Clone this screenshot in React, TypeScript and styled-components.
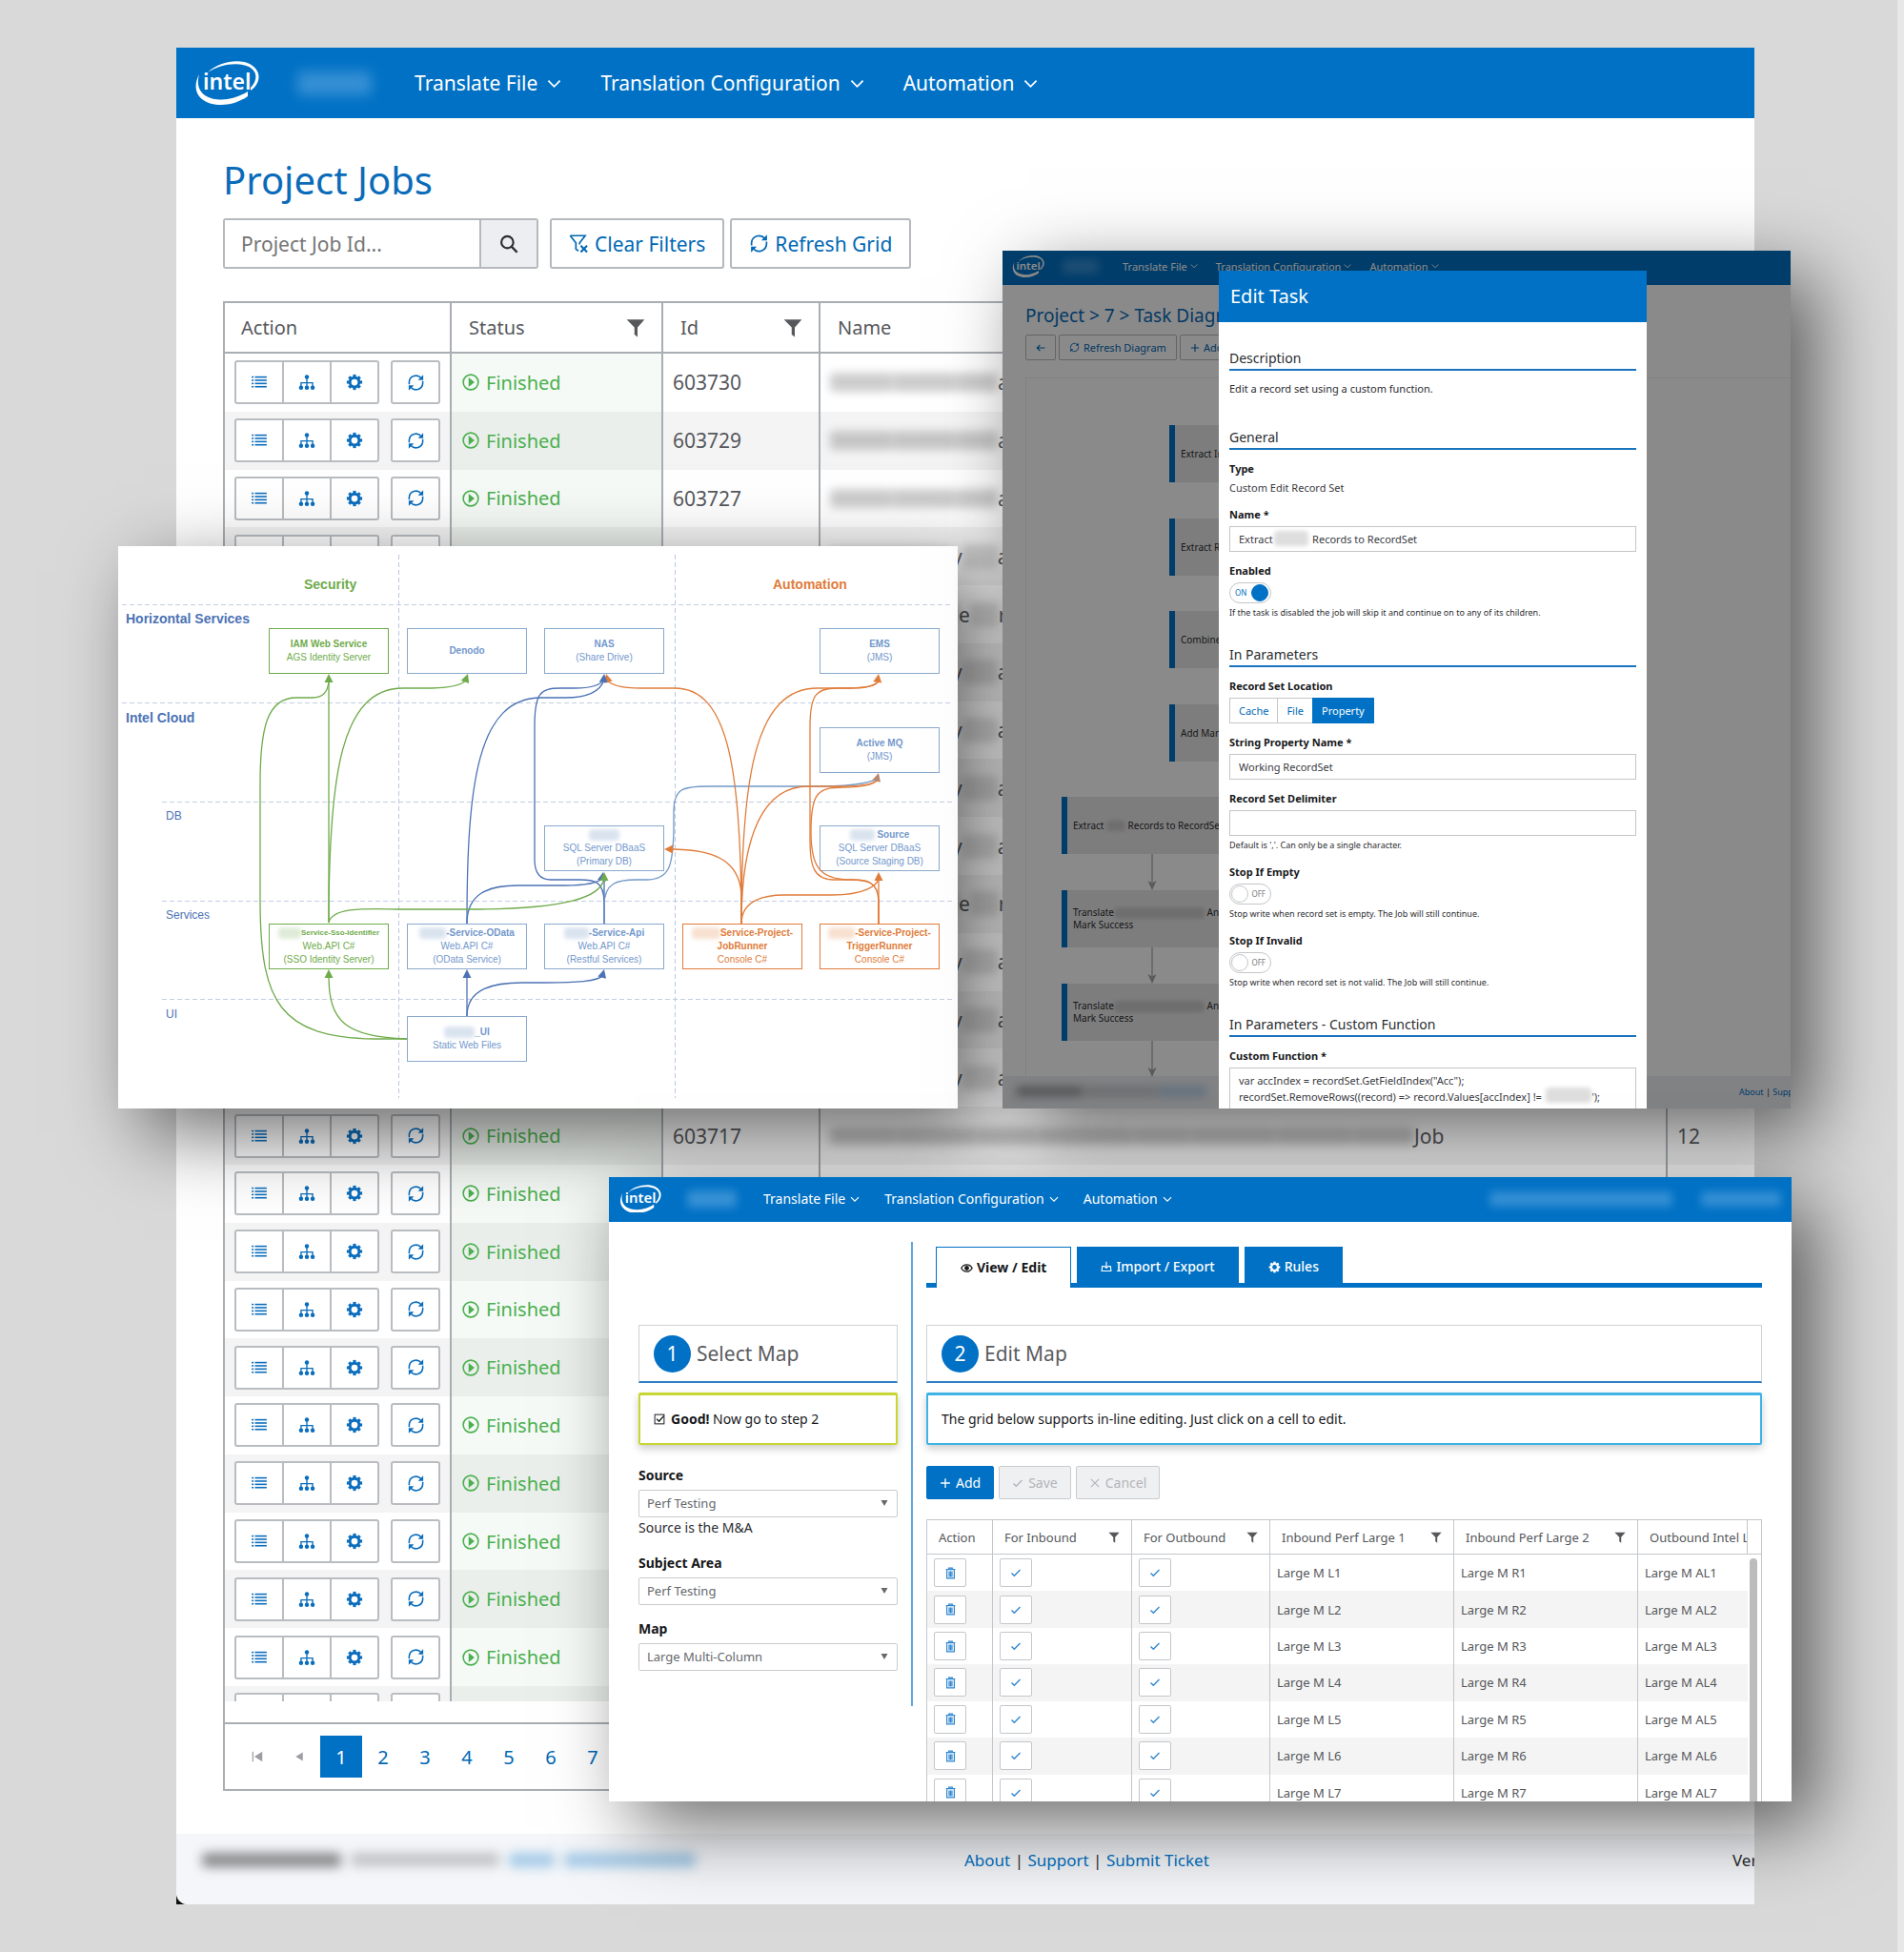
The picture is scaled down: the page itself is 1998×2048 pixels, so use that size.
import React from "react";
import styled, { createGlobalStyle, css } from "styled-components";

const blue = "#0071c5";
const line = "#a9aeb3";
const sans = `"Noto Sans", "Open Sans", sans-serif`;
const arial = `"Liberation Sans", Arial, sans-serif`;

const GlobalStyle = createGlobalStyle`
  *, *::before, *::after { box-sizing: border-box; }
  body { margin: 0; background: #d9d9d9; font-family: ${sans}; color: #2b2c30; }
  button, input, select, textarea { font: inherit; color: inherit; margin: 0; }
  button { cursor: pointer; }
  a { color: ${blue}; text-decoration: none; }
  h1, h2, h3, p, ul { margin: 0; padding: 0; font-weight: 400; }
`;

/* ---------- icons ---------- */

type IconName =
  | "list" | "tree" | "gear" | "refresh" | "play" | "funnel" | "clear" | "search"
  | "check" | "x" | "plus" | "trash" | "eye" | "import" | "back" | "tick" | "down"
  | "first" | "prev" | "caret";

const icons: Record<IconName, React.ReactNode> = {
  list: (
    <g fill="currentColor">
      {[2, 5, 8, 11].map((y) => (
        <React.Fragment key={y}>
          <rect x="1" y={y + 0.5} width="1.8" height="1.4" />
          <rect x="4" y={y + 0.5} width="11" height="1.4" />
        </React.Fragment>
      ))}
    </g>
  ),
  tree: (
    <g fill="currentColor">
      <circle cx="8" cy="3" r="2" />
      <path d="M7.4 4h1.2v4H14v4h-1.2V9.2H8.6V12H7.4V9.2H3.2V12H2V8h5.4z" />
      <circle cx="2.6" cy="13" r="2" />
      <circle cx="8" cy="13" r="2" />
      <circle cx="13.4" cy="13" r="2" />
    </g>
  ),
  gear: (
    <g fill="currentColor">
      {[0, 45, 90, 135, 180, 225, 270, 315].map((a) => (
        <rect key={a} x="6.6" y="0.8" width="2.8" height="3.4" transform={`rotate(${a} 8 8)`} />
      ))}
      <circle cx="8" cy="8" r="4.3" fill="none" stroke="currentColor" strokeWidth="2.6" />
    </g>
  ),
  refresh: (
    <g fill="none" stroke="currentColor" strokeWidth="1.3">
      <path d="M2 9.5V7.500A6 6 0 0 1 12.6 4" />
      <path d="M14 6.5v2A6 6 0 0 1 3.4 12" />
      <path d="M14.4 1v4.600h-4.600z" fill="currentColor" stroke="none" />
      <path d="M1.6 15v-4.600h4.600z" fill="currentColor" stroke="none" />
    </g>
  ),
  play: (
    <g>
      <circle cx="8" cy="8" r="7" fill="none" stroke="currentColor" strokeWidth="1.4" />
      <path d="M6 3.6l5.5 4.400L6 12.400z" fill="currentColor" />
    </g>
  ),
  funnel: <path fill="currentColor" d="M0.5 1h15L9.6 7.500v8L7 13.500V7.500z" />,
  clear: (
    <g fill="none" stroke="currentColor" strokeWidth="1.3">
      <path d="M1 1.700h12L8.6 7.500v1.300M1 1.700l4.600 5.800v5l2 1.400" />
      <path d="M9.5 9.800l5 5M14.5 9.800l-5 5" strokeWidth="1.6" />
    </g>
  ),
  search: (
    <g fill="none" stroke="currentColor" strokeWidth="1.7">
      <circle cx="6.7" cy="6.5" r="5" />
      <path d="M10.3 10.200l4.600 4.800" strokeWidth="2" />
    </g>
  ),
  check: <path fill="none" stroke="currentColor" strokeWidth="1.8" d="M2 8.600l3.800 3.800L14 4" />,
  x: <path fill="none" stroke="currentColor" strokeWidth="1.6" d="M2.5 2.500l11 11M13.5 2.500l-11 11" />,
  plus: <path fill="none" stroke="currentColor" strokeWidth="1.8" d="M8 1.500v13M1.5 8h13" />,
  trash: (
    <g fill="none" stroke="currentColor" strokeWidth="1.5">
      <path d="M2 3.200h12M5.8 3V1.400h4.400V3" />
      <path d="M3.2 4v10.600h9.600V4M6.2 5.500v7.500M8 5.500v7.500M9.8 5.500v7.500" />
    </g>
  ),
  eye: (
    <g fill="none" stroke="currentColor" strokeWidth="1.6">
      <path d="M1 8c3-6 11-6 14 0-3 6-11 6-14 0z" />
      <circle cx="8" cy="8" r="2.2" fill="currentColor" />
    </g>
  ),
  import: (
    <g fill="none" stroke="currentColor" strokeWidth="1.5">
      <path d="M5 7.500H2.200L1.500 14h13l-.7-6.500H11" />
      <path d="M8 1v8.500M5 6.800L8 10l3-3.200" />
    </g>
  ),
  back: <path fill="none" stroke="currentColor" strokeWidth="1.8" d="M15 8H2M7 3L2 8l5 5" />,
  tick: (
    <g fill="none" stroke="currentColor" strokeWidth="1.3">
      <rect x="1.5" y="1.5" width="13" height="13" />
      <path d="M4 7.500l3.400 3.500L14 3.500" strokeWidth="1.8" />
    </g>
  ),
  down: <path fill="none" stroke="currentColor" strokeWidth="1.9" d="M1.5 5L8 11.500 14.5 5" />,
  first: <path fill="currentColor" d="M2 2h1.400v12H2zM14 2v12L4.5 8z" />,
  prev: <path fill="currentColor" d="M13 2v12L3 8z" />,
  caret: <path fill="currentColor" d="M1 2h14L8 14z" />,
};

const Svg = styled.svg<{ $size: number }>`
  width: ${(p) => p.$size}px;
  height: ${(p) => p.$size}px;
  flex: none;
  display: block;
`;

const Icon = ({ name, size = 16 }: { name: IconName; size?: number }) => (
  <Svg $size={size} viewBox="0 0 16 16" aria-hidden="true">
    {icons[name]}
  </Svg>
);

const LogoSvg = styled.svg<{ $w: number }>`
  width: ${(p) => p.$w}px;
  flex: none;
  display: block;
`;

const IntelLogo = ({ width }: { width: number }) => (
  <LogoSvg $w={width} viewBox="0 0 68 46" role="img" aria-label="Intel">
    <path fill="#fff" d="M5 14C-5 33 8 46 28 46c11 0 21-4 28-9v-5c-8 5-18 8.500-27 8.500C12 40.500 0 32 5 14z" />
    <path fill="#fff" d="M14 12C25 1 46-3 58 3c13 7 12 20 1 28v-3c7-7 8-17-2-22C46 1 27 3 14 12z" />
    <text x="9" y="30" fill="#fff" fontSize="23" fontWeight="600" fontFamily="Noto Sans, Open Sans, sans-serif">
      intel
    </text>
  </LogoSvg>
);

const Redacted = styled.span<{ $w: number; $h?: number; $c?: string; $b?: number }>`
  display: inline-block;
  flex: none;
  vertical-align: middle;
  width: ${(p) => p.$w}px;
  height: ${(p) => p.$h ?? 10}px;
  background: ${(p) => p.$c ?? "rgba(90,90,90,.3)"};
  border-radius: 4px;
  filter: blur(${(p) => p.$b ?? 5}px);
`;

/* ---------- top bar ---------- */

type BarSize = "lg" | "md" | "sm";
const bars = {
  lg: { h: 74, pad: 19, low: 0, logo: 68, g1: 40, mark: 78, g2: 45, font: 21, chev: 15, cg: 10, gap: 41 },
  md: { h: 47, pad: 11, low: 2, logo: 44, g1: 27, mark: 52, g2: 28, font: 14, chev: 10, cg: 5, gap: 26 },
  sm: { h: 36, pad: 10, low: 4, logo: 34, g1: 19, mark: 38, g2: 25, font: 11, chev: 8, cg: 3, gap: 19 },
};

const Bar = styled.header<{ $s: BarSize }>`
  height: ${(p) => bars[p.$s].h}px;
  padding: 0 ${(p) => bars[p.$s].pad}px ${(p) => bars[p.$s].low}px;
  background: ${blue};
  display: flex;
  align-items: center;
  color: #fff;
`;
const BarMark = styled.div<{ $s: BarSize }>`
  margin: 0 ${(p) => bars[p.$s].g2}px 0 ${(p) => bars[p.$s].g1}px;
  display: flex;
`;
const BarNav = styled.nav<{ $s: BarSize }>`
  display: flex;
  gap: ${(p) => bars[p.$s].gap}px;
  font-size: ${(p) => bars[p.$s].font}px;
`;
const BarItem = styled.button<{ $s: BarSize }>`
  display: flex;
  align-items: center;
  gap: ${(p) => bars[p.$s].cg}px;
  padding: 0;
  border: 0;
  background: none;
  white-space: nowrap;
`;
const BarUser = styled.div`
  margin-left: auto;
  display: flex;
  gap: 30px;
`;

const TopBar = ({ size, user }: { size: BarSize; user?: boolean }) => {
  const b = bars[size];
  return (
    <Bar $s={size}>
      <IntelLogo width={b.logo} />
      <BarMark $s={size}>
        <Redacted $w={b.mark} $h={b.font + 4} $c="rgba(150,200,240,.36)" $b={size === "lg" ? 7 : 5} />
      </BarMark>
      <BarNav $s={size}>
        {["Translate File", "Translation Configuration", "Automation"].map((t) => (
          <BarItem key={t} $s={size} type="button">
            {t}
            <Icon name="down" size={b.chev} />
          </BarItem>
        ))}
      </BarNav>
      {user && (
        <BarUser>
          <Redacted $w={192} $h={16} $c="rgba(150,200,240,.34)" />
          <Redacted $w={84} $h={16} $c="rgba(150,200,240,.34)" />
        </BarUser>
      )}
    </Bar>
  );
};

/* ---------- jobs page ---------- */

const Desktop = styled.div`
  position: relative;
  padding: 50px 150px 51px 185px;
  border-right: 7px solid #e8e8e8;
  overflow: hidden;
`;
const PageBack = styled.div`
  background: #111;
`;
const Page = styled.div`
  background: #fff;
  border-bottom-left-radius: 12px;
  overflow: hidden;
`;
const Main = styled.main`
  padding: 41px 0 45px 49px;
`;
const Title = styled.h1`
  font-size: 40px;
  line-height: 48px;
  color: #0a6bb9;
`;
const Toolbar = styled.div`
  display: flex;
  gap: 6px;
  margin: 16px 0 34px;
  height: 53px;
  font-size: 21px;
`;
const SearchBox = styled.form`
  display: flex;
  width: 331px;
  margin-right: 6px;
  border: 2px solid #b5b9bd;
  border-radius: 3px;
`;
const SearchInput = styled.input`
  flex: 1;
  min-width: 0;
  border: 0;
  padding: 0 17px;
  background: #fff;
  &::placeholder { color: #757575; opacity: 1; }
`;
const SearchButton = styled.button`
  width: 60px;
  display: grid;
  place-items: center;
  border: 0;
  border-left: 2px solid #b5b9bd;
  background: #edeef1;
  color: #2b2c30;
`;
const ToolButton = styled.button`
  display: flex;
  align-items: center;
  gap: 6px;
  padding: 0 18px;
  border: 2px solid #b5b9bd;
  border-radius: 3px;
  background: #fff;
  color: #0068b5;
  white-space: nowrap;
`;
const Grid = styled.section`
  border: 2px solid ${line};
  border-right: 0;
  overflow: hidden;
  color: #56585c;
`;
const GridViewport = styled.div`
  height: 1414px;
  margin-bottom: 22px;
  overflow: hidden;
`;
const JobsTable = styled.table<{ $h?: number }>`
  width: 1906px;
  ${(p) => p.$h && css`height: ${p.$h}px;`}
  table-layout: fixed;
  border-collapse: separate;
  border-spacing: 0;
  th, td { padding: 0; border-right: 2px solid ${line}; text-align: left; font-weight: 400; }
`;
const HeadCell = styled.th`
  height: 53px;
  border-bottom: 2px solid ${line};
  font-size: 20px;
`;
const HeadInner = styled.div<{ $p: number; $r: number }>`
  display: flex;
  justify-content: space-between;
  align-items: center;
  padding: 0 ${(p) => p.$r}px 0 ${(p) => p.$p}px;
  white-space: nowrap;
  overflow: hidden;
`;
const JobRow = styled.tr`
  &:nth-child(even) { background: #f4f4f4; }
`;
const ActionCell = styled.div`
  display: flex;
  gap: 12px;
  padding-left: 10px;
`;
const ButtonGroup = styled.div`
  display: flex;
  border: 2px solid #b9bdc1;
  border-radius: 3px;
  background: #fff;
  overflow: hidden;
`;
const IconButton = styled.button`
  width: 48px;
  height: 42px;
  display: grid;
  place-items: center;
  padding: 0;
  border: 0;
  background: none;
  color: #0a6dbd;
  & + & { border-left: 2px solid #b9bdc1; width: 50px; }
`;
const StatusTd = styled.td`
  background: rgba(60, 150, 80, 0.05);
`;
const Status = styled.div`
  display: flex;
  align-items: center;
  gap: 7px;
  padding-left: 11px;
  font-size: 20px;
  color: #4bb04f;
`;
const CellText = styled.div`
  display: flex;
  align-items: center;
  padding-left: 10px;
  font-size: 21px;
  white-space: nowrap;
`;
const Pager = styled.nav`
  display: flex;
  align-items: center;
  height: 70px;
  padding-left: 12px;
  border-top: 2px solid ${line};
  font-size: 20px;
`;
const PageButton = styled.button<{ $on?: boolean; $mute?: boolean }>`
  width: 44px;
  height: 44px;
  display: grid;
  place-items: center;
  padding: 0;
  border: 0;
  background: ${(p) => (p.$on ? blue : "none")};
  color: ${(p) => (p.$on ? "#fff" : p.$mute ? "#9c9ea1" : "#0068b5")};
`;
const Footer = styled.footer`
  height: 74px;
  background: #f4f6f9;
  overflow: hidden;
  white-space: nowrap;
  font-size: 17px;
  display: grid;
  grid-template-columns: 800px 806px auto;
  padding: 0 0 20px 27px;
  align-items: center;
`;
const FooterNote = styled.div`
  display: flex;
  gap: 10px;
`;

const jobIds = [603730, 603729, 603727, 603726, 603725, 603724, 603723, 603722, 603721, 603720, 603719, 603718, 603718, 603717, 603716, 603715, 603714, 603713, 603712, 603711, 603710, 603709, 603708, 603707];

const JobName = ({ i }: { i: number }) => {
  if (i < 3)
    return (
      <>
        <Redacted $w={66} $h={20} /><Redacted $w={66} $h={20} /><Redacted $w={44} $h={20} />a
      </>
    );
  if (i === 13)
    return (
      <>
        {[70, 84, 64, 100, 60, 90, 80, 65].map((w, k) => <Redacted key={k} $w={w} $h={18} />)}Job
      </>
    );
  const alt = i === 4 || i === 9;
  return (
    <>
      <Redacted $w={alt ? 135 : 128} $h={18} />{alt ? "e" : "y"}
      <Redacted $w={alt ? 30 : 37} $h={26} $c="rgba(90,90,90,.2)" $b={4} />{alt ? "r" : "a"}
    </>
  );
};

const JobsCols = () => (
  <colgroup>
    <col style={{ width: 238 }} /><col style={{ width: 222 }} /><col style={{ width: 165 }} />
    <col style={{ width: 889 }} /><col />
  </colgroup>
);

const JobsPage = () => (
  <PageBack>
    <Page>
      <TopBar size="lg" />
      <Main>
        <Title>Project Jobs</Title>
        <Toolbar>
          <SearchBox>
            <SearchInput aria-label="Project Job Id" placeholder="Project Job Id..." />
            <SearchButton type="button" aria-label="Search"><Icon name="search" size={20} /></SearchButton>
          </SearchBox>
          <ToolButton type="button"><Icon name="clear" size={21} />Clear Filters</ToolButton>
          <ToolButton type="button"><Icon name="refresh" size={21} />Refresh Grid</ToolButton>
        </Toolbar>
        <Grid>
          <JobsTable>
            <JobsCols />
            <thead>
              <tr>
                <HeadCell><HeadInner $p={17} $r={0}>Action</HeadInner></HeadCell>
                <HeadCell><HeadInner $p={18} $r={17}>Status<Icon name="funnel" size={20} /></HeadInner></HeadCell>
                <HeadCell><HeadInner $p={18} $r={17}>Id<Icon name="funnel" size={20} /></HeadInner></HeadCell>
                <HeadCell><HeadInner $p={18} $r={17}>Name</HeadInner></HeadCell>
                <HeadCell />
              </tr>
            </thead>
          </JobsTable>
          <GridViewport>
            <JobsTable $h={1459}>
              <JobsCols />
              <tbody>
                {jobIds.map((id, i) => (
                  <JobRow key={i}>
                    <td>
                      <ActionCell>
                        <ButtonGroup>
                          <IconButton type="button" aria-label="Details"><Icon name="list" size={18} /></IconButton>
                          <IconButton type="button" aria-label="Diagram"><Icon name="tree" size={18} /></IconButton>
                          <IconButton type="button" aria-label="Settings"><Icon name="gear" size={18} /></IconButton>
                        </ButtonGroup>
                        <ButtonGroup>
                          <IconButton type="button" aria-label="Rerun"><Icon name="refresh" size={19} /></IconButton>
                        </ButtonGroup>
                      </ActionCell>
                    </td>
                    <StatusTd><Status><Icon name="play" size={18} />Finished</Status></StatusTd>
                    <td><CellText>{id}</CellText></td>
                    <td><CellText><JobName i={i} /></CellText></td>
                    <td><CellText>12</CellText></td>
                  </JobRow>
                ))}
              </tbody>
            </JobsTable>
          </GridViewport>
          <Pager aria-label="Pages">
            <PageButton $mute type="button" aria-label="First page"><Icon name="first" size={14} /></PageButton>
            <PageButton $mute type="button" aria-label="Previous page"><Icon name="prev" size={12} /></PageButton>
            {[1, 2, 3, 4, 5, 6, 7].map((n) => (
              <PageButton key={n} $on={n === 1} type="button">{n}</PageButton>
            ))}
          </Pager>
        </Grid>
      </Main>
      <Footer>
        <FooterNote>
          <Redacted $w={146} $h={15} $c="rgba(30,30,30,.5)" $b={6} />
          <Redacted $w={156} $h={14} $c="rgba(60,60,60,.28)" $b={6} />
          <Redacted $w={48} $h={15} $c="rgba(0,113,197,.32)" $b={6} />
          <Redacted $w={138} $h={15} $c="rgba(0,113,197,.32)" $b={6} />
        </FooterNote>
        <div>
          <a href="#about">About</a> | <a href="#support">Support</a> | <a href="#ticket">Submit Ticket</a>
        </div>
        <div>Version</div>
      </Footer>
    </Page>
  </PageBack>
);

/* ---------- floating windows ---------- */

const Window = styled.section<{ $x: number; $y: number; $w: number; $h: number }>`
  position: absolute;
  left: ${(p) => p.$x}px;
  top: ${(p) => p.$y}px;
  width: ${(p) => p.$w}px;
  height: ${(p) => p.$h}px;
  background: #fff;
  box-shadow: 26px 26px 76px rgba(0, 0, 0, 0.58);
`;
const Clip = styled.div`
  position: relative;
  height: 100%;
  overflow: hidden;
`;

/* ---------- architecture diagram ---------- */

const green = "#6fab4b";
const dark = "#4c72b5";
const light = "#7398c8";
const orange = "#e07c3a";

const DiagramSvg = styled.svg`
  position: absolute;
  inset: 0;
  width: 100%;
  height: 100%;
`;
const Label = styled.div<{ $x: number; $y: number; $c: string; $big?: boolean }>`
  position: absolute;
  left: ${(p) => p.$x}px;
  top: ${(p) => p.$y}px;
  font: ${(p) => (p.$big ? "700 14px" : "400 12px")} / 16px ${arial};
  color: ${(p) => p.$c};
`;
const Node = styled.div<{ $x: number; $y: number; $c: string; $b: string; $small?: boolean }>`
  position: absolute;
  left: ${(p) => p.$x}px;
  top: ${(p) => p.$y}px;
  width: 126px;
  height: 48px;
  display: flex;
  flex-direction: column;
  align-items: center;
  justify-content: center;
  border: 1px solid ${(p) => p.$b};
  background: #fff;
  color: ${(p) => p.$c};
  font: 400 10px/14px ${arial};
  white-space: nowrap;
  strong { font-size: ${(p) => (p.$small ? 8 : 10)}px; }
`;

type N = { x: number; y: number; c: "g" | "b" | "o"; red?: number; t: string[]; s?: string[]; small?: boolean };
const nodes: N[] = [
  { x: 159, y: 87, c: "g", t: ["IAM Web Service"], s: ["AGS Identity Server"] },
  { x: 304, y: 87, c: "b", t: ["Denodo"] },
  { x: 448, y: 87, c: "b", t: ["NAS"], s: ["(Share Drive)"] },
  { x: 737, y: 87, c: "b", t: ["EMS"], s: ["(JMS)"] },
  { x: 737, y: 191, c: "b", t: ["Active MQ"], s: ["(JMS)"] },
  { x: 448, y: 294, c: "b", red: 32, t: [""], s: ["SQL Server DBaaS", "(Primary DB)"] },
  { x: 737, y: 294, c: "b", red: 26, t: [" Source"], s: ["SQL Server DBaaS", "(Source Staging DB)"] },
  { x: 159, y: 397, c: "g", red: 24, t: ["Service-Sso-Identifier"], s: ["Web.API C#", "(SSO Identity Server)"], small: true },
  { x: 304, y: 397, c: "b", red: 28, t: ["-Service-OData"], s: ["Web.API C#", "(OData Service)"] },
  { x: 448, y: 397, c: "b", red: 26, t: ["-Service-Api"], s: ["Web.API C#", "(Restful Services)"] },
  { x: 593, y: 397, c: "o", red: 30, t: ["Service-Project-", "JobRunner"], s: ["Console C#"] },
  { x: 737, y: 397, c: "o", red: 28, t: ["-Service-Project-", "TriggerRunner"], s: ["Console C#"] },
  { x: 304, y: 494, c: "b", red: 32, t: ["_UI"], s: ["Static Web Files"] },
];
const nodeColors = { g: [green, green], b: ["#7398cc", "#8aa9cc"], o: [orange, orange] };
const smudge = { g: "rgba(120,170,90,.24)", b: "rgba(110,145,195,.26)", o: "rgba(224,124,58,.24)" };

const edges: [string, string][] = [
  [green, "M222 396V142"],
  [green, "M304 518H270C170 516 150 480 150 372V250C150 190 158 160 188 160H205Q221 160 222 142"],
  [green, "M304 518C240 516 222 500 222 452"],
  [green, "M222 396C222 240 235 150 300 150H330Q362 149 366 141"],
  [orange, "M655 397C655 230 640 150 585 150H550Q518 150 513 140"],
  [dark, "M367 494V452"],
  [dark, "M367 494C367 465 395 459 425 459H450C480 459 505 458 510 451"],
  [dark, "M367 397C367 250 378 160 445 160H470Q505 160 511 141"],
  [dark, "M367 397C367 365 390 357 420 357H470C495 357 505 354 510 349"],
  [dark, "M511 397V375C511 352 500 351 485 351H455Q438 351 438 330V190C438 155 444 150 465 150H480Q505 150 511 141"],
  [dark, "M511 397V350"],
  [light, "M511 397V378C511 354 525 351 545 351H555C580 351 583 336 584 300V280C584 256 592 253 620 253H740C775 253 795 248 799 244"],
  [green, "M222 396C226 378 270 382 300 382H380C470 381 507 370 511 350"],
  [orange, "M655 397C655 240 670 150 735 150H765Q796 150 799 142"],
  [orange, "M655 397C655 300 680 253 725 253H760Q794 253 799 245"],
  [orange, "M655 397V370C655 330 625 319 581 319"],
  [orange, "M655 397C655 372 680 367 700 367H750C785 367 797 357 799 350"],
  [orange, "M799 397V350"],
  [orange, "M799 397V374C799 352 785 351 770 351H752C730 351 727 335 727 310V190C727 155 735 150 755 150H770Q796 150 799 142"],
  [orange, "M799 397V374C799 352 785 351 770 351C735 351 728 335 728 300C728 260 735 254 762 254Q794 254 799 245"],
];
const arrows: [string, number, number, number][] = [
  [green, 222, 135, 0], [green, 222, 445, 0], [green, 368, 135, 20], [orange, 513, 135, -15],
  [dark, 511, 135, 5], [dark, 367, 445, 0], [dark, 511, 445, 15], [dark, 510, 343, 10], [green, 511, 343, 0],
  [orange, 799, 135, 8], ["#b98670", 799, 239, 15], [orange, 574, 319, -90], [orange, 799, 343, 0],
];

const Diagram = () => (
  <Window $x={124} $y={573} $w={881} $h={590} aria-label="Architecture diagram">
    <Clip>
      <DiagramSvg viewBox="0 0 881 590" fill="none" aria-hidden="true">
        <g stroke="#c3cde4" strokeWidth="1" strokeDasharray="5 3">
          <path d="M4 61.500H876M4 164.500H876M46 268.500H876M46 372.500H876M46 475.500H876" />
          <path d="M294.500 9V579M584.500 9V579" stroke="#b9c9de" />
        </g>
      </DiagramSvg>
      <Label $big $c={green} $x={195} $y={32}>Security</Label>
      <Label $big $c={orange} $x={687} $y={32}>Automation</Label>
      <Label $big $c={dark} $x={8} $y={68}>Horizontal Services</Label>
      <Label $big $c={dark} $x={8} $y={172}>Intel Cloud</Label>
      <Label $c={dark} $x={50} $y={275}>DB</Label>
      <Label $c={dark} $x={50} $y={379}>Services</Label>
      <Label $c={dark} $x={50} $y={483}>UI</Label>
      {nodes.map((n, i) => (
        <Node key={i} $x={n.x - 1} $y={n.y - 1} $c={nodeColors[n.c][0]} $b={nodeColors[n.c][1]} $small={n.small}>
          {n.t.map((t, k) => (
            <strong key={k}>
              {k === 0 && n.red && <Redacted $w={n.red} $h={12} $c={smudge[n.c]} $b={2} />}
              {t}
            </strong>
          ))}
          {n.s?.map((s) => <span key={s}>{s}</span>)}
        </Node>
      ))}
      <DiagramSvg viewBox="1 1 881 590" fill="none" aria-hidden="true">
        {edges.map(([c, d], i) => <path key={i} d={d} stroke={c} strokeWidth="1.3" />)}
        {arrows.map(([c, x, y, r], i) => (
          <path key={i} d="M0 0L4.500 9H-4.500Z" fill={c} transform={`translate(${x} ${y}) rotate(${r})`} />
        ))}
      </DiagramSvg>
    </Clip>
  </Window>
);

/* ---------- task editor ---------- */

const TaskHead = styled.div`
  padding: 17px 24px 0;
`;
const TaskTitle = styled.h2`
  font-size: 19px;
  line-height: 30px;
  color: #0a6bb9;
  white-space: nowrap;
`;
const TaskTools = styled.div`
  display: flex;
  gap: 3px;
  height: 27px;
  margin-top: 5px;
  font-size: 11px;
`;
const TaskButton = styled.button`
  display: flex;
  align-items: center;
  gap: 4px;
  padding: 0 10px;
  border: 1px solid #b5b9bd;
  border-radius: 2px;
  background: #fff;
  color: #0068b5;
  white-space: nowrap;
`;
const Canvas = styled.div`
  position: relative;
  height: 733px;
  margin: 18px 0 0 24px;
  border: 1px solid #eee;
  border-width: 1px 0 0 1px;
`;
const Task = styled.div<{ $x: number; $y: number }>`
  position: absolute;
  left: ${(p) => p.$x}px;
  top: ${(p) => p.$y}px;
  width: 190px;
  height: 60px;
  padding-left: 6px;
  border-left: 6px solid ${blue};
  background: #e8e8e8;
  display: flex;
  flex-direction: column;
  justify-content: center;
  font-size: 10px;
  line-height: 13px;
  white-space: nowrap;
`;
const Flow = styled.svg<{ $y: number }>`
  position: absolute;
  left: 126px;
  top: ${(p) => p.$y}px;
  width: 12px;
  height: 38px;
`;
const TaskFooter = styled.footer`
  height: 36px;
  margin-right: -60px;
  padding: 0 54px 4px 14px;
  display: flex;
  align-items: center;
  background: #eef0f4;
  font-size: 9px;
  white-space: nowrap;
`;
const FooterLinks = styled.div`
  flex: none;
  width: 60px;
  margin-left: auto;
`;
const Shade = styled.div`
  position: absolute;
  inset: 0;
  background: rgba(0, 0, 0, 0.46);
`;
const Modal = styled.div`
  position: absolute;
  left: 227px;
  top: 21px;
  width: 449px;
  background: #fff;
  color: #2b2c30;
`;
const ModalTitle = styled.h2`
  padding: 0 12px;
  background: ${blue};
  color: #fff;
  font-size: 20px;
  line-height: 54px;
`;
const ModalBody = styled.form`
  padding: 2px 11px 20px;
  font-size: 11px;
  line-height: 16px;
`;
const SectionTitle = styled.h3`
  margin-top: 26px;
  padding-bottom: 1px;
  border-bottom: 2px solid #1a73bd;
  font-size: 14px;
  line-height: 20px;
`;
const Para = styled.p`
  margin: 11px 0 33px;
`;
const Field = styled.div`
  margin-top: 12px;
  color: #3a3b3f;
`;
const FieldLabel = styled.label`
  display: block;
  margin-bottom: 4px;
  font-weight: 700;
  color: #17181a;
`;
const Box = styled.div`
  position: relative;
`;
const Text = styled.input`
  display: block;
  width: 100%;
  height: 27px;
  padding: 0 9px;
  border: 1px solid #c4c6c9;
  background: #fff;
`;
const Over = styled.span`
  position: absolute;
  left: 47px;
  top: 4px;
`;
const Help = styled.p`
  margin-top: 2px;
  font-size: 9px;
  color: #2b2c30;
`;
const Code = styled.textarea`
  display: block;
  width: 100%;
  height: 90px;
  padding: 4px 9px;
  border: 1px solid #c4c6c9;
  line-height: 17px;
  resize: none;
  overflow: hidden;
`;
const CodeOver = styled.span`
  position: absolute;
  left: 332px;
  top: 20px;
`;
const Segments = styled.div`
  display: flex;
  height: 27px;
`;
const Segment = styled.button<{ $on?: boolean }>`
  padding: 0 9px;
  border: 1px solid ${(p) => (p.$on ? blue : "#c4c6c9")};
  margin-right: -1px;
  background: ${(p) => (p.$on ? blue : "#fff")};
  color: ${(p) => (p.$on ? "#fff" : "#0068b5")};
`;
const Toggle = styled.label`
  position: relative;
  display: flex;
  align-items: center;
  width: 44px;
  height: 22px;
  border: 1px solid #c4c6c9;
  border-radius: 11px;
  font-size: 8px;
  color: #77797c;
  background: #fff;
  justify-content: flex-end;
  padding-right: 5px;
  input { position: absolute; opacity: 0; margin: 0; }
  &::before {
    content: "";
    position: absolute;
    left: 1px;
    top: 1px;
    width: 18px;
    height: 18px;
    border: 1px solid #c4c6c9;
    border-radius: 50%;
    background: #fff;
  }
  &:has(input:checked) { justify-content: flex-start; padding-left: 5px; color: ${blue}; }
  &:has(input:checked)::before { left: 22px; border-color: ${blue}; background: ${blue}; }
`;

const TaskToggle = ({ label, id, on, help }: { label: string; id: string; on?: boolean; help: string }) => (
  <Field>
    <FieldLabel htmlFor={id}>{label}</FieldLabel>
    <Toggle>
      <input id={id} type="checkbox" defaultChecked={on} />
      {on ? "ON" : "OFF"}
    </Toggle>
    <Help>{help}</Help>
  </Field>
);

const FlowArrow = ({ y }: { y: number }) => (
  <Flow $y={y} viewBox="0 0 12 38" aria-hidden="true">
    <path d="M6 0V32" stroke="#a6a6a6" strokeWidth="1.200" />
    <path d="M1.500 28L6 38 10.500 28 6 30.500z" fill="#a6a6a6" />
  </Flow>
);

const TaskEditor = () => (
  <Window $x={1052} $y={263} $w={827} $h={900} aria-label="Task editor">
    <Clip>
      <TopBar size="sm" />
      <TaskHead>
        <TaskTitle>Project &gt; 7 &gt; Task Diagram</TaskTitle>
        <TaskTools>
          <TaskButton type="button" aria-label="Back"><Icon name="back" size={10} /></TaskButton>
          <TaskButton type="button"><Icon name="refresh" size={11} />Refresh Diagram</TaskButton>
          <TaskButton type="button"><Icon name="plus" size={10} />Add Task</TaskButton>
        </TaskTools>
      </TaskHead>
      <Canvas>
        <Task $x={150} $y={49}>Extract Input Records</Task>
        <Task $x={150} $y={147}>Extract Records to RecordSet</Task>
        <Task $x={150} $y={244}>Combine Records</Task>
        <Task $x={150} $y={342}>Add Mark Success</Task>
        <Task $x={37} $y={439}>
          <span>Extract <Redacted $w={20} $h={11} $c="rgba(0,0,0,.12)" $b={2} /> Records to RecordSet</span>
        </Task>
        <FlowArrow y={499} />
        <Task $x={37} $y={537}>
          <span>Translate<Redacted $w={95} $h={12} $c="rgba(0,0,0,.12)" $b={2} /> And</span>
          <span>Mark Success</span>
        </Task>
        <FlowArrow y={597} />
        <Task $x={37} $y={635}>
          <span>Translate<Redacted $w={95} $h={12} $c="rgba(0,0,0,.12)" $b={2} /> And</span>
          <span>Mark Success</span>
        </Task>
        <FlowArrow y={695} />
      </Canvas>
      <TaskFooter>
        <Redacted $w={70} $h={10} $c="rgba(0,0,0,.35)" />
        <Redacted $w={80} $h={10} $c="rgba(0,0,0,.16)" />
        <Redacted $w={50} $h={10} $c="rgba(0,113,197,.25)" />
        <FooterLinks><a href="#about">About</a> | <a href="#support">Support</a></FooterLinks>
      </TaskFooter>
      <Shade />
      <Modal role="dialog" aria-label="Edit Task">
        <ModalTitle>Edit Task</ModalTitle>
        <ModalBody>
          <SectionTitle>Description</SectionTitle>
          <Para>Edit a record set using a custom function.</Para>
          <SectionTitle>General</SectionTitle>
          <Field>
            <FieldLabel as="div">Type</FieldLabel>
            Custom Edit Record Set
          </Field>
          <Field>
            <FieldLabel htmlFor="name">Name *</FieldLabel>
            <Box>
              <Text id="name" defaultValue={"Extract \u2003\u2003\u2003\u2005 Records to RecordSet"} />
              <Over><Redacted $w={36} $h={16} $c="#dedede" $b={2} /></Over>
            </Box>
          </Field>
          <TaskToggle id="enabled" label="Enabled" on help="If the task is disabled the job will skip it and continue on to any of its children." />
          <SectionTitle>In Parameters</SectionTitle>
          <Field>
            <FieldLabel as="div">Record Set Location</FieldLabel>
            <Segments>
              <Segment type="button">Cache</Segment>
              <Segment type="button">File</Segment>
              <Segment type="button" $on>Property</Segment>
            </Segments>
          </Field>
          <Field>
            <FieldLabel htmlFor="prop">String Property Name *</FieldLabel>
            <Text id="prop" defaultValue="Working RecordSet" />
          </Field>
          <Field>
            <FieldLabel htmlFor="delim">Record Set Delimiter</FieldLabel>
            <Text id="delim" />
            <Help>Default is ','. Can only be a single character.</Help>
          </Field>
          <TaskToggle id="empty" label="Stop If Empty" help="Stop write when record set is empty. The Job will still continue." />
          <TaskToggle id="invalid" label="Stop If Invalid" help="Stop write when record set is not valid. The Job will still continue." />
          <SectionTitle>In Parameters - Custom Function</SectionTitle>
          <Field>
            <FieldLabel htmlFor="fn">Custom Function *</FieldLabel>
            <Box>
              <Code
                id="fn"
                defaultValue={'var accIndex = recordSet.GetFieldIndex("Acc");\nrecordSet.RemoveRows((record) => record.Values[accIndex] != \u2003\u2003\u2003\u2003\u2002\');'}
              />
              <CodeOver><Redacted $w={48} $h={16} $c="#dedede" $b={2} /></CodeOver>
            </Box>
          </Field>
        </ModalBody>
      </Modal>
    </Clip>
  </Window>
);

/* ---------- map editor ---------- */

const MapBody = styled.div`
  display: grid;
  grid-template-columns: 272px 1fr;
  column-gap: 30px;
  padding: 21px 31px 0;
  font-size: 14px;
  line-height: 20px;
`;
const MapSide = styled.aside`
  position: relative;
  padding-top: 87px;
  height: 487px;
  &::after {
    content: "";
    position: absolute;
    right: -16px;
    top: 0;
    bottom: 0;
    width: 2px;
    background: #5fa6de;
  }
`;
const Tabs = styled.div`
  display: flex;
  align-items: flex-end;
  gap: 6px;
  height: 48px;
  padding: 5px 0 0 10px;
  margin-bottom: 39px;
  border-bottom: 5px solid ${blue};
`;
const Tab = styled.button<{ $on?: boolean }>`
  display: flex;
  align-items: center;
  gap: 4px;
  height: 38px;
  padding: 4px 25px 0;
  border: 0;
  background: ${blue};
  color: #fff;
  font-weight: 500;
  white-space: nowrap;
  ${(p) =>
    p.$on &&
    css`
      height: 43px;
      margin-bottom: -5px;
      padding: 0 25px;
      border: 1px solid ${blue};
      border-bottom: 0;
      background: #fff;
      color: #17181a;
      font-weight: 700;
    `}
`;
const Step = styled.h2`
  display: flex;
  align-items: center;
  gap: 6px;
  height: 61px;
  padding: 0 15px;
  border: 1px solid #cfd1d3;
  border-bottom: 2px solid #2f80c6;
  font-size: 21px;
  color: #5a5c60;
`;
const StepNo = styled.span`
  width: 39px;
  height: 39px;
  display: grid;
  place-items: center;
  border-radius: 50%;
  background: ${blue};
  color: #fff;
`;
const Notice = styled.div<{ $c: string }>`
  display: flex;
  align-items: center;
  gap: 6px;
  height: 55px;
  margin: 10px 0 22px;
  padding: 0 14px;
  border: 2px solid ${(p) => p.$c};
  border-top-width: 3px;
  border-radius: 2px;
  box-shadow: 0 4px 8px rgba(0, 0, 0, 0.2);
  color: #17181a;
  white-space: nowrap;
`;
const MapField = styled.div<{ $gap?: number }>`
  margin-top: ${(p) => p.$gap ?? 0}px;
`;
const MapLabel = styled.label`
  display: block;
  margin-bottom: 5px;
  font-weight: 700;
  color: #17181a;
`;
const SelectWrap = styled.div`
  position: relative;
  margin-bottom: 1px;
  color: #66686c;
  svg { position: absolute; right: 10px; top: 10px; pointer-events: none; }
`;
const Select = styled.select`
  display: block;
  width: 100%;
  height: 29px;
  padding: 0 8px 1px;
  border: 1px solid #c9cbce;
  border-radius: 2px;
  background: #fff;
  font-size: 13px;
  appearance: none;
`;
const MapTools = styled.div`
  display: flex;
  gap: 5px;
  height: 35px;
  margin-bottom: 21px;
`;
const MapButton = styled.button<{ $primary?: boolean }>`
  display: flex;
  align-items: center;
  gap: 5px;
  padding: 0 13px;
  border: 1px solid ${(p) => (p.$primary ? blue : "#c9cbce")};
  border-radius: 2px;
  background: ${(p) => (p.$primary ? blue : "#eff0f2")};
  color: ${(p) => (p.$primary ? "#fff" : "#b2b4b8")};
`;
const MapGrid = styled.div`
  position: relative;
  border: 1px solid #c3c7cb;
  color: #55575b;
`;
const MapTable = styled.table<{ $h?: number }>`
  width: 861px;
  ${(p) => p.$h && css`height: ${p.$h}px;`}
  table-layout: fixed;
  border-collapse: separate;
  border-spacing: 0;
  font-size: 13px;
  th, td { padding: 0; text-align: left; font-weight: 400; white-space: nowrap; overflow: hidden; }
  th { height: 35px; border-right: 1px solid #c3c7cb; }
  td { border-right: 1px solid #c3c7cb; }
  td:last-child { border-right: 0; }
  tbody tr:nth-child(even) { background: #f4f4f4; }
`;
const MapHeadRow = styled.div`
  border-bottom: 1px solid #c3c7cb;
`;
const Cell = styled.div`
  padding-left: 7px;
`;
const CellButton = styled.button`
  display: grid;
  place-items: center;
  width: 34px;
  height: 30px;
  padding: 0;
  border: 1px solid #c3c7cb;
  border-radius: 2px;
  background: #fff;
  color: #2f86d0;
`;
const Scroll = styled.div`
  position: absolute;
  right: 4px;
  top: 40px;
  bottom: 0;
  width: 8px;
  border-radius: 4px 4px 0 0;
  background: #bcbcbc;
`;

const MapCols = () => (
  <colgroup>
    <col style={{ width: 69 }} /><col style={{ width: 146 }} /><col style={{ width: 145 }} />
    <col style={{ width: 193 }} /><col style={{ width: 193 }} /><col />
  </colgroup>
);
const mapHeads = ["For Inbound", "For Outbound", "Inbound Perf Large 1", "Inbound Perf Large 2"];

const MapSelect = ({ id, label, value, gap, help }: { id: string; label: string; value: string; gap?: number; help?: string }) => (
  <MapField $gap={gap}>
    <MapLabel htmlFor={id}>{label}</MapLabel>
    <SelectWrap>
      <Select id={id} defaultValue={value}><option>{value}</option></Select>
      <Icon name="caret" size={8} />
    </SelectWrap>
    {help}
  </MapField>
);

const MapEditor = () => (
  <Window $x={639} $y={1235} $w={1241} $h={655} aria-label="Map editor">
    <Clip>
      <TopBar size="md" user />
      <MapBody>
        <MapSide>
          <Step><StepNo>1</StepNo>Select Map</Step>
          <Notice $c="#c8d633"><Icon name="tick" size={12} /><span><b>Good!</b> Now go to step 2</span></Notice>
          <MapSelect id="source" label="Source" value="Perf Testing" help="Source is the M&A" />
          <MapSelect id="subject" label="Subject Area" value="Perf Testing" gap={17} />
          <MapSelect id="map" label="Map" value="Large Multi-Column" gap={15} />
        </MapSide>
        <div>
          <Tabs>
            <Tab $on type="button"><Icon name="eye" size={13} />View / Edit</Tab>
            <Tab type="button"><Icon name="import" size={12} />Import / Export</Tab>
            <Tab type="button"><Icon name="gear" size={13} />Rules</Tab>
          </Tabs>
          <Step><StepNo>2</StepNo>Edit Map</Step>
          <Notice $c="#3fb3e6">The grid below supports in-line editing. Just click on a cell to edit.</Notice>
          <MapTools>
            <MapButton $primary type="button"><Icon name="plus" size={12} />Add</MapButton>
            <MapButton disabled type="button"><Icon name="check" size={12} />Save</MapButton>
            <MapButton disabled type="button"><Icon name="x" size={12} />Cancel</MapButton>
          </MapTools>
          <MapGrid>
            <MapHeadRow>
              <MapTable>
                <MapCols />
                <thead>
                  <tr>
                    <th><HeadInner $p={12} $r={0}>Action</HeadInner></th>
                    {mapHeads.map((h) => (
                      <th key={h}><HeadInner $p={12} $r={12}>{h}<Icon name="funnel" size={12} /></HeadInner></th>
                    ))}
                    <th><HeadInner $p={12} $r={0}>Outbound Intel Large 1</HeadInner></th>
                  </tr>
                </thead>
              </MapTable>
            </MapHeadRow>
            <MapTable $h={269}>
              <MapCols />
              <tbody>
                {[1, 2, 3, 4, 5, 6, 7].map((n) => (
                  <tr key={n}>
                    <td><Cell><CellButton type="button" aria-label={`Delete row ${n}`}><Icon name="trash" size={13} /></CellButton></Cell></td>
                    <td><Cell><CellButton type="button" aria-label="Inbound"><Icon name="check" size={12} /></CellButton></Cell></td>
                    <td><Cell><CellButton type="button" aria-label="Outbound"><Icon name="check" size={12} /></CellButton></Cell></td>
                    <td><Cell>Large M L{n}</Cell></td>
                    <td><Cell>Large M R{n}</Cell></td>
                    <td><Cell>Large M AL{n}</Cell></td>
                  </tr>
                ))}
              </tbody>
            </MapTable>
            <Scroll />
          </MapGrid>
        </div>
      </MapBody>
    </Clip>
  </Window>
);

export default function App() {
  return (
    <>
      <GlobalStyle />
      <Desktop>
        <JobsPage />
        <Diagram />
        <TaskEditor />
        <MapEditor />
      </Desktop>
    </>
  );
}
